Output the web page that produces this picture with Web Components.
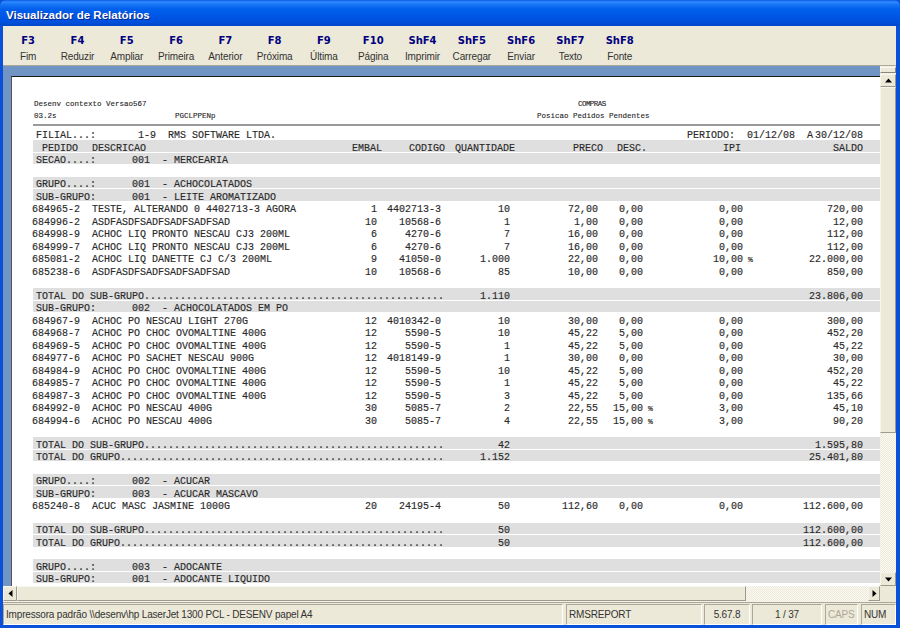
<!DOCTYPE html>
<html lang="pt">
<head>
<meta charset="utf-8">
<title>Visualizador de Relatórios</title>
<style>
  html, body { margin: 0; height: 100%; overflow: hidden; background: #0a50d8; }
</style>
</head>
<body>
<report-window>
  <span slot="title">Visualizador de Relatórios</span>
  <tool-key slot="tools" key="F3" label="Fim"></tool-key>
  <tool-key slot="tools" key="F4" label="Reduzir"></tool-key>
  <tool-key slot="tools" key="F5" label="Ampliar"></tool-key>
  <tool-key slot="tools" key="F6" label="Primeira"></tool-key>
  <tool-key slot="tools" key="F7" label="Anterior"></tool-key>
  <tool-key slot="tools" key="F8" label="Próxima"></tool-key>
  <tool-key slot="tools" key="F9" label="Última"></tool-key>
  <tool-key slot="tools" key="F10" label="Página"></tool-key>
  <tool-key slot="tools" key="ShF4" label="Imprimir"></tool-key>
  <tool-key slot="tools" key="ShF5" label="Carregar"></tool-key>
  <tool-key slot="tools" key="ShF6" label="Enviar"></tool-key>
  <tool-key slot="tools" key="ShF7" label="Texto"></tool-key>
  <tool-key slot="tools" key="ShF8" label="Fonte"></tool-key>
  <report-sheet slot="sheet"></report-sheet>
  <status-cell slot="status" w="560">Impressora padrão \\desenv\hp LaserJet 1300 PCL - DESENV papel A4</status-cell>
  <status-cell slot="status" w="136" style="margin-left:1px">RMSREPORT</status-cell>
  <status-cell slot="status" w="46" center>5.67.8</status-cell>
  <status-cell slot="status" w="70" center>1 / 37</status-cell>
  <status-cell slot="status" w="33" style="margin-left:1px;color:#aca899">CAPS</status-cell>
  <status-cell slot="status" w="35" style="margin-left:1px">NUM</status-cell>
</report-window>

<script>
class ScrollBtn extends HTMLElement {
  constructor() {
    super();
    this.attachShadow({ mode: "open" });
    const rot = { up: 0, right: 90, down: 180, left: 270 }[this.getAttribute("dir")] || 0;
    this.shadowRoot.innerHTML = `
      <style>
        :host {
          display: flex;
          flex: none;
          align-items: center;
          justify-content: center;
          box-sizing: border-box;
          background: #ece9d8;
          border: 1px solid;
          border-color: #f6f5ee #9d9a8c #9d9a8c #f6f5ee;
        }
        svg { display: block; }
      </style>
      <svg width="7" height="7" viewBox="0 0 7 7" style="transform:rotate(${rot}deg)"><path d="M3.5 1.5 7 5.5H0z" fill="#000"/></svg>
    `;
  }
}
customElements.define("scroll-btn", ScrollBtn);

class ScrollBar extends HTMLElement {
  constructor() {
    super();
    this.attachShadow({ mode: "open" });
    const vertical = this.getAttribute("orient") === "v";
    this.shadowRoot.innerHTML = `
      <style>
        :host {
          display: flex;
          flex-direction: ${vertical ? "column" : "row"};
          flex: none;
          box-sizing: border-box;
          background: repeating-conic-gradient(#ece9d8 0 25%, #fbfaf5 0 50%) 0 0 / 2px 2px;
        }
        .sliver { height: 6px; flex: none; background: #ece9d8; border: 1px solid; border-color: #f6f5ee #8a8778 #8a8778 #f6f5ee; box-sizing: border-box; margin-top: 1px; }
        .thumb {
          flex: none;
          box-sizing: border-box;
          background: #ece9d8;
          border: 1px solid;
          border-color: #f6f5ee #9d9a8c #9d9a8c #f6f5ee;
        }
        .up { height: 13px; margin-top: 1px; }
        .down { height: 14px; margin-top: auto; }
        .left { width: 14px; height: 15px; }
        .right { width: 12px; height: 15px; margin-left: auto; }
      </style>
      ${vertical ? `
        <div class="sliver"></div>
        <scroll-btn class="up" dir="up"></scroll-btn>
        <div class="thumb" style="height:346px"></div>
        <scroll-btn class="down" dir="down"></scroll-btn>
      ` : `
        <scroll-btn class="left" dir="left"></scroll-btn>
        <div class="thumb" style="width:729px;height:15px"></div>
        <scroll-btn class="right" dir="right"></scroll-btn>
      `}
    `;
  }
}
customElements.define("scroll-bar", ScrollBar);

class ToolKey extends HTMLElement {
  constructor() {
    super();
    this.attachShadow({ mode: "open" });
    this.shadowRoot.innerHTML = `
      <style>
        :host {
          display: flex;
          flex-direction: column;
          align-items: center;
          width: 49.3px;
          flex: none;
        }
        b {
          height: 16px;
          padding-top: 9px;
          font: bold 10px/12px "DejaVu Sans", sans-serif;
          color: #000080;
        }
        span {
          font: 10px/12px "Liberation Sans", sans-serif;
          letter-spacing: -0.12px;
          color: #333;
        }
      </style>
      <b>${this.getAttribute("key")}</b>
      <span>${this.getAttribute("label")}</span>
    `;
  }
}
customElements.define("tool-key", ToolKey);

class StatusCell extends HTMLElement {
  constructor() {
    super();
    this.attachShadow({ mode: "open" });
    const w = this.getAttribute("w");
    this.shadowRoot.innerHTML = `
      <style>
        :host {
          display: block;
          flex: none;
          box-sizing: border-box;
          width: ${w}px;
          height: 21px;
          padding: 0 2px;
          border: 1px solid;
          border-color: #aca899 #fff #fff #aca899;
          font: 10px/19px "Liberation Sans", sans-serif;
          letter-spacing: -0.18px;
          white-space: nowrap;
          overflow: hidden;
          ${this.hasAttribute("center") ? "text-align: center;" : ""}
        }
      </style>
      <slot></slot>
    `;
  }
}
customElements.define("status-cell", StatusCell);

class ReportRow extends HTMLElement {
  constructor() {
    super();
    this.attachShadow({ mode: "open" });
  }

  render(kind, cells, blankH) {
    const pct = (v) => v.endsWith("%")
      ? `${v.slice(0, -2)}<i>%</i>`
      : v;
    let body = "";
    if (kind === "data") {
      body = `<div class="grid data">${cells.map((c, i) => `<span class="${i < 2 ? "" : "num"}">${pct(c)}</span>`).join("")}</div>`;
    } else if (kind === "head") {
      body = `<div class="grid head">${cells.map((c, i) => `<span class="${i < 2 ? "" : "num"}">${c}</span>`).join("")}</div>`;
    } else if (kind === "total") {
      body = `<div class="grid data tot"><span style="grid-column:1/5">${cells[0]}</span><span class="num">${cells[1]}</span><span class="num" style="grid-column:9">${cells[2]}</span></div>`;
    } else if (kind === "filial") {
      body = `<div class="flex"><span>${cells[0]}</span><span>${cells[1]}<span style="margin-left:2px">${cells[2]}</span></span></div>`;
    } else if (kind === "sec") {
      body = `<div class="plain">${cells[0]}</div>`;
    }
    this.shadowRoot.innerHTML = `
      <style>
        :host {
          display: block;
          box-sizing: border-box;
          height: ${blankH || 12.5}px;
          font: 10px/12.5px "Liberation Mono", monospace;
          color: #2a2a2a;
          -webkit-text-stroke: 0.15px #2a2a2a;
        }
        div { box-sizing: border-box; height: 100%; padding-top: 2.5px; white-space: pre; }
        .grid { display: grid; }
        .data { grid-template-columns: 60px 246px 39px 64px 69px 88px 45px 100px 120px; }
        .tot, .head { margin-left: 1px; padding-left: 3px; }
        .tot { grid-template-columns: 56px 246px 39px 64px 69px 88px 45px 100px 120px; }
        .head { grid-template-columns: 56px 260px 30px 63px 70px 88px 44px 94px 122px; }
        .flex { display: flex; justify-content: space-between; margin-left: 1px; padding: 2.5px 17px 0 3px; }
        .plain { margin-left: 1px; padding-left: 3px; }
        .tot, .head, .plain {
          background: linear-gradient(#dfdfdf calc(100% - 1px), transparent 0);
        }
        .num { text-align: right; }
        i { display: inline-block; width: 0; font: 8px/1 "Liberation Mono", monospace; margin: 0 -5px 0 5px; }
      </style>
      ${body}
    `;
  }
}
customElements.define("report-row", ReportRow);

class ReportSheet extends HTMLElement {
  constructor() {
    super();
    this.attachShadow({ mode: "open" });
    this.shadowRoot.innerHTML = `
      <style>
        :host {
          display: block;
          box-sizing: border-box;
          height: 100%;
          padding: 21px 0 0 20px;
          background: #fff;
          border-top: 1px solid #1a1a1a;
          border-left: 1px solid #555;
          overflow: hidden;
        }
        .small {
          display: grid;
          grid-template-columns: 141px 362px 1fr;
          padding-left: 2px;
          font: 7.5px/12px "Liberation Mono", monospace;
          color: #222;
          -webkit-text-stroke: 0.1px #222;
        }
        .rule { height: 2px; margin: 2px 0 1.5px 1px; background: #9a9a9a; }
        .c2 { grid-column: 1 / 3; }
        .compras { padding-left: 41px; letter-spacing: -0.55px; }
      </style>
      <div class="small"><span class="c2">Desenv contexto Versao567</span><span class="compras">COMPRAS</span><span>03.2s</span><span>PGCLPPENp</span><span>Posicao Pedidos Pendentes</span></div>
      <div class="rule"></div>
      <div id="rows"></div>
    `;
  }

  connectedCallback() {
    const dots = (label) => label + ".".repeat(68 - label.length);
    const sub = dots("TOTAL DO SUB-GRUPO");
    const gru = dots("TOTAL DO GRUPO");
    const lines = [
      ["filial", "FILIAL...:       1-9  RMS SOFTWARE LTDA.", "PERIODO:  01/12/08  A", "30/12/08"],
      ["head", " PEDIDO", "DESCRICAO", "EMBAL", "CODIGO", "QUANTIDADE", "PRECO", "DESC.", "IPI", "SALDO"],
      ["sec", "SECAO....:      001  - MERCEARIA"],
      ["blank"],
      ["sec", "GRUPO....:      001  - ACHOCOLATADOS"],
      ["sec", "SUB-GRUPO:      001  - LEITE AROMATIZADO"],
      ["data", "684965-2", "TESTE, ALTERANDO 0 4402713-3 AGORA", "1", "4402713-3", "10", "72,00", "0,00", "0,00", "720,00"],
      ["data", "684996-2", "ASDFASDFSADFSADFSADFSAD", "10", "10568-6", "1", "1,00", "0,00", "0,00", "12,00"],
      ["data", "684998-9", "ACHOC LIQ PRONTO NESCAU CJ3 200ML", "6", "4270-6", "7", "16,00", "0,00", "0,00", "112,00"],
      ["data", "684999-7", "ACHOC LIQ PRONTO NESCAU CJ3 200ML", "6", "4270-6", "7", "16,00", "0,00", "0,00", "112,00"],
      ["data", "685081-2", "ACHOC LIQ DANETTE CJ C/3 200ML", "9", "41050-0", "1.000", "22,00", "0,00", "10,00 %", "22.000,00"],
      ["data", "685238-6", "ASDFASDFSADFSADFSADFSAD", "10", "10568-6", "85", "10,00", "0,00", "0,00", "850,00"],
      ["blank"],
      ["total", sub, "1.110", "23.806,00"],
      ["sec", "SUB-GRUPO:      002  - ACHOCOLATADOS EM PO"],
      ["data", "684967-9", "ACHOC PO NESCAU LIGHT 270G", "12", "4010342-0", "10", "30,00", "0,00", "0,00", "300,00"],
      ["data", "684968-7", "ACHOC PO CHOC OVOMALTINE 400G", "12", "5590-5", "10", "45,22", "5,00", "0,00", "452,20"],
      ["data", "684969-5", "ACHOC PO CHOC OVOMALTINE 400G", "12", "5590-5", "1", "45,22", "5,00", "0,00", "45,22"],
      ["data", "684977-6", "ACHOC PO SACHET NESCAU 900G", "12", "4018149-9", "1", "30,00", "0,00", "0,00", "30,00"],
      ["data", "684984-9", "ACHOC PO CHOC OVOMALTINE 400G", "12", "5590-5", "10", "45,22", "5,00", "0,00", "452,20"],
      ["data", "684985-7", "ACHOC PO CHOC OVOMALTINE 400G", "12", "5590-5", "1", "45,22", "5,00", "0,00", "45,22"],
      ["data", "684987-3", "ACHOC PO CHOC OVOMALTINE 400G", "12", "5590-5", "3", "45,22", "5,00", "0,00", "135,66"],
      ["data", "684992-0", "ACHOC PO NESCAU 400G", "30", "5085-7", "2", "22,55", "15,00 %", "3,00", "45,10"],
      ["data", "684994-6", "ACHOC PO NESCAU 400G", "30", "5085-7", "4", "22,55", "15,00 %", "3,00", "90,20"],
      ["blank"],
      ["total", sub, "42", "1.595,80"],
      ["total", gru, "1.152", "25.401,80"],
      ["blank"],
      ["sec", "GRUPO....:      002  - ACUCAR"],
      ["sec", "SUB-GRUPO:      003  - ACUCAR MASCAVO"],
      ["data", "685240-8", "ACUC MASC JASMINE 1000G", "20", "24195-4", "50", "112,60", "0,00", "0,00", "112.600,00"],
      ["blank"],
      ["total", sub, "50", "112.600,00"],
      ["total", gru, "50", "112.600,00"],
      ["blank"],
      ["sec", "GRUPO....:      003  - ADOCANTE"],
      ["sec", "SUB-GRUPO:      001  - ADOCANTE LIQUIDO"],
    ];
    const host = this.shadowRoot.getElementById("rows");
    for (const [kind, ...cells] of lines) {
      const row = document.createElement("report-row");
      row.render(kind, cells, kind === "blank" ? 11.5 : 0);
      host.appendChild(row);
    }
  }
}
customElements.define("report-sheet", ReportSheet);

class ReportWindow extends HTMLElement {
  constructor() {
    super();
    this.attachShadow({ mode: "open" });
    this.shadowRoot.innerHTML = `
      <style>
        :host {
          display: flex;
          flex-direction: column;
          box-sizing: border-box;
          width: 900px;
          height: 628px;
          padding: 0 4px 3px 3px;
          background: #0a50d8;
        }
        .title {
          flex: none;
          height: 26px;
          margin: 0 -4px 0 -3px;
          padding-left: 6px;
          border-radius: 6px 6px 0 0;
          background: linear-gradient(#0a5ae6 0, #2f8bff 2px, #1a78f5 4px, #0060ec 9px, #0055e5 17px, #0050dc 22px, #0047c8 26px);
          font: bold 11.5px/30px "Liberation Sans", sans-serif;
          color: #fff;
          text-shadow: 1px 1px #0f2a8c;
        }
        .tools {
          flex: none;
          display: flex;
          box-sizing: border-box;
          height: 40px;
          padding-left: 0.5px;
          background: #ece9d8;
          border-bottom: 1px solid #aca899;
        }
        .main { flex: 1; display: flex; min-height: 0; }
        .view {
          flex: 1;
          min-width: 0;
          box-sizing: border-box;
          padding: 10px 0 0 8px;
          background: #7094c4;
          overflow: hidden;
        }
        .h { flex: none; display: flex; height: 16px; background: #ece9d8; }
        .h scroll-bar { width: 877px; }
        .corner { width: 16px; background: #ece9d8; }
        .main scroll-bar { width: 16px; background-color: #ece9d8; }
        .status {
          flex: none;
          display: flex;
          gap: 2px;
          box-sizing: border-box;
          height: 23px;
          padding-top: 1px;
          background: #ece9d8;
          border-top: 1px solid #aca899;
          color: #333;
        }
      </style>
      <div class="title"><slot name="title"></slot></div>
      <div class="tools"><slot name="tools"></slot></div>
      <div class="main">
        <div class="view"><slot name="sheet"></slot></div>
        <scroll-bar orient="v"></scroll-bar>
      </div>
      <div class="h">
        <scroll-bar orient="h"></scroll-bar>
        <div class="corner"></div>
      </div>
      <div class="status"><slot name="status"></slot></div>
    `;
  }
}
customElements.define("report-window", ReportWindow);
</script>
</body>
</html>
